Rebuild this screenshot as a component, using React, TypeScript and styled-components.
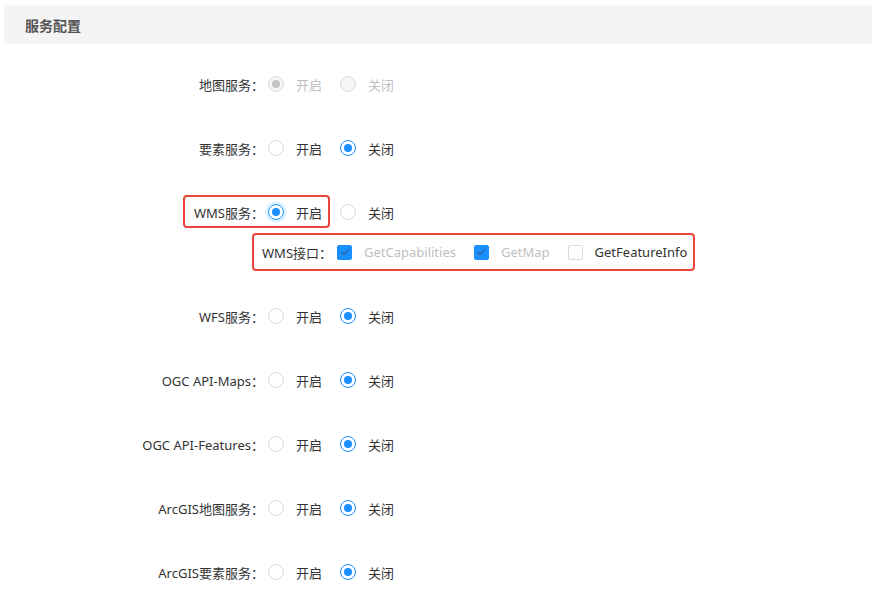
import React from 'react';
import styled, { createGlobalStyle, css } from 'styled-components';

const GlobalStyle = createGlobalStyle`
  html, body {
    margin: 0;
    padding: 0;
    background: #fff;
  }
  body {
    font-family: "Noto Sans", "Noto Sans CJK SC", sans-serif;
    font-size: 13px;
    color: #333;
  }
`;

const colours = {
  blue: '#1890ff',
  border: '#d9d9d9',
  disabledText: '#bfbfbf',
  disabledBg: '#f5f5f5',
  red: '#e8453c',
};

const Page = styled.div`
  padding: 5px 1px 0 4px;
`;

const SectionHeader = styled.div`
  height: 39px;
  display: flex;
  align-items: center;
  padding-left: 21px;
  background: #f4f4f4;
  font-weight: bold;
  font-size: 14px;
  color: #555;
`;

const Form = styled.div`
  display: flex;
  flex-direction: column;
  gap: 24px;
  padding-top: 20px;
`;

const Row = styled.div`
  position: relative;
  display: grid;
  grid-template-columns: 264px 1fr;
  align-items: center;
  height: 40px;
`;

const Label = styled.div`
  text-align: right;
  padding-right: 4px;
  white-space: nowrap;
`;

const Controls = styled.div`
  display: flex;
  align-items: center;
`;

const Highlight = styled.div`
  position: absolute;
  left: 179px;
  width: 143px;
  top: 3px;
  height: 29px;
  border: 2px solid ${colours.red};
  border-radius: 4px;
  pointer-events: none;
`;

const SubRow = styled.div`
  display: grid;
  grid-template-columns: 248px auto;
  height: 40px;
  align-items: center;
`;

const SubBox = styled.div`
  grid-column: 2;
  display: inline-flex;
  align-items: center;
  height: 34px;
  padding: 0 6px 0 8px;
  border: 2px solid ${colours.red};
  border-radius: 4px;
  justify-self: start;
`;

const InlineLabel = styled.span`
  margin-right: 5px;
  white-space: nowrap;
`;

const Option = styled.label<{ $disabled?: boolean }>`
  display: inline-flex;
  align-items: center;
  gap: 12px;
  margin-right: 18px;
  color: ${(p) => (p.$disabled ? colours.disabledText : '#333')};
  white-space: nowrap;
  &:last-child {
    margin-right: 0;
  }
`;

const RadioCircle = styled.span<{ $checked?: boolean; $disabled?: boolean; $focused?: boolean }>`
  position: relative;
  box-sizing: border-box;
  width: 16px;
  height: 16px;
  border-radius: 50%;
  border: 1px solid ${colours.border};
  background: #fff;
  ${(p) =>
    p.$checked &&
    css`
      border-color: ${colours.blue};
      &::after {
        content: '';
        position: absolute;
        left: 3px;
        top: 3px;
        width: 8px;
        height: 8px;
        border-radius: 50%;
        background: ${colours.blue};
      }
    `}
  ${(p) =>
    p.$disabled &&
    css`
      background: ${colours.disabledBg};
      border-color: ${colours.border};
      &::after {
        background: #c4c4c4;
      }
    `}
  ${(p) =>
    p.$focused &&
    css`
      box-shadow: 0 0 0 3px rgba(24, 144, 255, 0.12);
    `}
`;

const CheckBox = styled.span<{ $checked?: boolean }>`
  box-sizing: border-box;
  width: 15px;
  height: 15px;
  border-radius: 2px;
  border: 1px solid ${(p) => (p.$checked ? colours.blue : colours.border)};
  background: ${(p) => (p.$checked ? colours.blue : '#fff')};
  display: flex;
  align-items: center;
  justify-content: center;
`;

type RadioProps = {
  text: string;
  checked?: boolean;
  disabled?: boolean;
  focused?: boolean;
};

const Radio: React.FunctionComponent<RadioProps> = ({ text, checked, disabled, focused }) => (
  <Option $disabled={disabled}>
    <RadioCircle $checked={checked} $disabled={disabled} $focused={focused} />
    <span>{text}</span>
  </Option>
);

type CheckProps = {
  text: string;
  checked?: boolean;
  disabled?: boolean;
};

const Check: React.FunctionComponent<CheckProps> = ({ text, checked, disabled }) => (
  <Option $disabled={disabled}>
    <CheckBox $checked={checked}>
      {checked && (
        <svg width="10" height="8" viewBox="0 0 10 8">
          <path d="M1 4 L3.8 6.6 L9 1.2" fill="none" stroke="#2a6fb8" strokeWidth="1.8" />
        </svg>
      )}
    </CheckBox>
    <span>{text}</span>
  </Option>
);

const OnOff: React.FunctionComponent<{ on?: boolean; disabled?: boolean; focused?: boolean }> = ({
  on,
  disabled,
  focused,
}) => (
  <Controls>
    <Radio text="开启" checked={on} disabled={disabled} focused={focused} />
    <Radio text="关闭" checked={!on && !disabled} disabled={disabled} />
  </Controls>
);

const services = [
  'WFS服务',
  'OGC API-Maps',
  'OGC API-Features',
  'ArcGIS地图服务',
  'ArcGIS要素服务',
];

export default function App() {
  return (
    <Page>
      <GlobalStyle />
      <SectionHeader>服务配置</SectionHeader>
      <Form>
        <Row>
          <Label>地图服务：</Label>
          <Controls>
            <Radio text="开启" checked disabled />
            <Radio text="关闭" disabled />
          </Controls>
        </Row>
        <Row>
          <Label>要素服务：</Label>
          <OnOff />
        </Row>
        <div>
          <Row>
            <Highlight />
            <Label>WMS服务：</Label>
            <OnOff on focused />
          </Row>
          <SubRow>
            <SubBox>
              <InlineLabel>WMS接口：</InlineLabel>
              <Check text="GetCapabilities" checked disabled />
              <Check text="GetMap" checked disabled />
              <Check text="GetFeatureInfo" />
            </SubBox>
          </SubRow>
        </div>
        {services.map((name) => (
          <Row key={name}>
            <Label>{name}：</Label>
            <OnOff />
          </Row>
        ))}
      </Form>
    </Page>
  );
}
